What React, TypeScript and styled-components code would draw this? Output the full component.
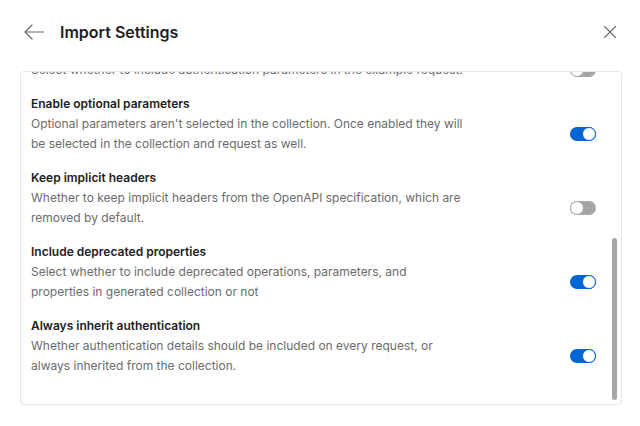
import React, { useLayoutEffect, useRef, useState } from "react";
import styled, { createGlobalStyle } from "styled-components";

const Global = createGlobalStyle`
  html, body { margin: 0; padding: 0; background: #ffffff; }
  body { font-family: Inter, "Noto Sans", sans-serif; color: #212121; }
  * { box-sizing: border-box; }
`;

const Page = styled.div`
  width: 640px;
  height: 426px;
  display: flex;
  flex-direction: column;
`;

const Header = styled.div`
  height: 64px;
  padding: 0 24px;
  display: flex;
  align-items: center;
  gap: 16px;
  margin-bottom: 7px;
`;

const IconButton = styled.button`
  border: 0;
  background: transparent;
  padding: 0;
  display: flex;
  align-items: center;
  justify-content: center;
  color: #6b6b6b;
  cursor: pointer;
`;

const Title = styled.h1`
  margin: 0;
  flex: 1;
  font-size: 16px;
  font-weight: 600;
  line-height: 20px;
  color: #212121;
`;

const Card = styled.div`
  position: relative;
  margin: 0 18px 0 20px;
  height: 334px;
  border: 1px solid #e6e6e6;
  border-radius: 4px;
  overflow: hidden;
`;

const Scroller = styled.div`
  height: 100%;
  overflow-y: auto;
  scrollbar-width: none;
  &::-webkit-scrollbar { display: none; }
`;

const Thumb = styled.div`
  position: absolute;
  right: 4px;
  width: 5px;
  border-radius: 3px;
  background: #a6a6a6;
`;

const List = styled.div`
  display: flex;
  flex-direction: column;
  gap: 14px;
  padding: 23px 25px 28px 10px;
`;

const Row = styled.div`
  display: grid;
  grid-template-columns: 1fr auto;
  grid-template-rows: 20px auto;
  column-gap: 16px;
`;

const RowTitle = styled.div`
  grid-column: 1;
  grid-row: 1;
  font-size: 12px;
  font-weight: 600;
  line-height: 20px;
  color: #212121;
`;

const RowDesc = styled.div`
  grid-column: 1;
  grid-row: 2;
  font-size: 12px;
  line-height: 20px;
  color: #6b6b6b;
  white-space: nowrap;
`;

const Switch = styled.button<{ $on: boolean }>`
  grid-column: 2;
  grid-row: 2;
  align-self: center;
  width: 26px;
  height: 14px;
  padding: 0;
  border: 0;
  border-radius: 7px;
  background: ${(p) => (p.$on ? "#0265d2" : "#a6a6a6")};
  display: flex;
  align-items: center;
  justify-content: ${(p) => (p.$on ? "flex-end" : "flex-start")};
  cursor: pointer;
`;

const Knob = styled.span<{ $on: boolean }>`
  width: 14px;
  height: 14px;
  border-radius: 50%;
  background: #ffffff;
  border: 1px solid ${(p) => (p.$on ? "#0265d2" : "#a6a6a6")};
`;

type Setting = { title: string; lines: string[]; on: boolean };

const settings: Setting[] = [
  {
    title: "Collapse redundant folders",
    lines: [
      "Importing will collapse all folders that have only one child element and lack",
      "persistent folder-level data.",
    ],
    on: true,
  },
  {
    title: "Optimize conversion",
    lines: [
      "Optimizes conversion for large specification, disabling this option might affect",
      "the performance of conversion.",
    ],
    on: true,
  },
  {
    title: "Parameters resolution",
    lines: [
      "Select whether to generate the request and response parameters based on the",
      "schema or the example in the schema.",
    ],
    on: false,
  },
  {
    title: "Include webhooks",
    lines: ["Select whether to include Webhooks in the generated collection."],
    on: false,
  },
  {
    title: "Include auth info in example requests",
    lines: ["Select whether to include authentication parameters in the example request."],
    on: false,
  },
  {
    title: "Enable optional parameters",
    lines: [
      "Optional parameters aren't selected in the collection. Once enabled they will",
      "be selected in the collection and request as well.",
    ],
    on: true,
  },
  {
    title: "Keep implicit headers",
    lines: [
      "Whether to keep implicit headers from the OpenAPI specification, which are",
      "removed by default.",
    ],
    on: false,
  },
  {
    title: "Include deprecated properties",
    lines: [
      "Select whether to include deprecated operations, parameters, and",
      "properties in generated collection or not",
    ],
    on: true,
  },
  {
    title: "Always inherit authentication",
    lines: [
      "Whether authentication details should be included on every request, or",
      "always inherited from the collection.",
    ],
    on: true,
  },
];

const BackIcon = () => (
  <svg width="20" height="16" viewBox="0 0 20 16" fill="none">
    <path d="M1 8H19.5M8 1L1 8L8 15" stroke="currentColor" strokeWidth="1.2" strokeLinecap="round" strokeLinejoin="round" />
  </svg>
);

const CloseIcon = () => (
  <svg width="12" height="12" viewBox="0 0 12 12" fill="none">
    <path d="M0.5 0.5L11.5 11.5M11.5 0.5L0.5 11.5" stroke="currentColor" strokeWidth="1.1" strokeLinecap="round" />
  </svg>
);

export default function App() {
  const ref = useRef<HTMLDivElement>(null);
  const [thumb, setThumb] = useState({ top: 166, height: 162 });
  useLayoutEffect(() => {
    const el = ref.current;
    if (!el) return;
    el.scrollTop = el.scrollHeight;
    const track = el.clientHeight - 8;
    const h = Math.round((track * el.clientHeight) / el.scrollHeight);
    const t = Math.round(4 + (track * el.scrollTop) / el.scrollHeight);
    setThumb({ top: t, height: h });
  }, []);
  return (
    <Page>
      <Global />
      <Header>
        <IconButton aria-label="Back">
          <BackIcon />
        </IconButton>
        <Title>Import Settings</Title>
        <IconButton aria-label="Close">
          <CloseIcon />
        </IconButton>
      </Header>
      <Card>
        <Scroller ref={ref}>
          <List>
            {settings.map((s) => (
              <Row key={s.title}>
                <RowTitle>{s.title}</RowTitle>
                <RowDesc>
                  {s.lines.map((l, i) => (
                    <div key={i}>{l}</div>
                  ))}
                </RowDesc>
                <Switch $on={s.on} aria-pressed={s.on}>
                  <Knob $on={s.on} />
                </Switch>
              </Row>
            ))}
          </List>
        </Scroller>
        <Thumb style={{ top: thumb.top, height: thumb.height }} />
      </Card>
    </Page>
  );
}
